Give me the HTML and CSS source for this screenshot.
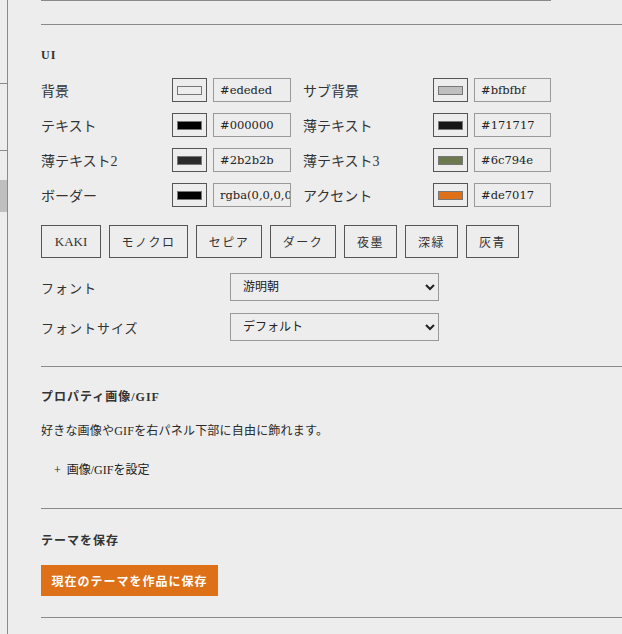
FILE: index.html
```
<!DOCTYPE html>
<html lang="ja">

<head>
    <meta charset="UTF-8">
    <meta name="viewport" content="width=device-width, initial-scale=1.0">
    <title>テーマ設定</title>
    <link rel="stylesheet" href="styles.css">
</head>

<body>
    <div class="layout">
        <aside class="side-rail">
            <div class="rail-item"></div>
            <div class="rail-item short"></div>
            <div class="rail-item active"></div>
        </aside>

        <main class="panel">
            <div class="prev-field"></div>

            <section class="section">
                <h3 class="section-title">UI</h3>

                <div class="color-grid">
                    <div class="color-field">
                        <span class="color-label">背景</span>
                        <span class="swatch"><span class="swatch-fill" style="background:#ededed"></span></span>
                        <input class="hex-input" type="text" value="#ededed">
                    </div>
                    <div class="color-field">
                        <span class="color-label">サブ背景</span>
                        <span class="swatch"><span class="swatch-fill" style="background:#bfbfbf"></span></span>
                        <input class="hex-input" type="text" value="#bfbfbf">
                    </div>
                    <div class="color-field">
                        <span class="color-label">テキスト</span>
                        <span class="swatch"><span class="swatch-fill" style="background:#000000"></span></span>
                        <input class="hex-input" type="text" value="#000000">
                    </div>
                    <div class="color-field">
                        <span class="color-label">薄テキスト</span>
                        <span class="swatch"><span class="swatch-fill" style="background:#171717"></span></span>
                        <input class="hex-input" type="text" value="#171717">
                    </div>
                    <div class="color-field">
                        <span class="color-label">薄テキスト2</span>
                        <span class="swatch"><span class="swatch-fill" style="background:#2b2b2b"></span></span>
                        <input class="hex-input" type="text" value="#2b2b2b">
                    </div>
                    <div class="color-field">
                        <span class="color-label">薄テキスト3</span>
                        <span class="swatch"><span class="swatch-fill" style="background:#6c794e"></span></span>
                        <input class="hex-input" type="text" value="#6c794e">
                    </div>
                    <div class="color-field">
                        <span class="color-label">ボーダー</span>
                        <span class="swatch"><span class="swatch-fill" style="background:#000000"></span></span>
                        <input class="hex-input" type="text" value="rgba(0,0,0,0.45)">
                    </div>
                    <div class="color-field">
                        <span class="color-label">アクセント</span>
                        <span class="swatch"><span class="swatch-fill" style="background:#de7017"></span></span>
                        <input class="hex-input" type="text" value="#de7017">
                    </div>
                </div>

                <div class="presets">
                    <button class="preset-btn">KAKI</button>
                    <button class="preset-btn">モノクロ</button>
                    <button class="preset-btn">セピア</button>
                    <button class="preset-btn">ダーク</button>
                    <button class="preset-btn">夜墨</button>
                    <button class="preset-btn">深緑</button>
                    <button class="preset-btn">灰青</button>
                </div>

                <div class="select-list">
                    <div class="select-row">
                        <span class="select-label">フォント</span>
                        <select class="select-box">
                            <option>游明朝</option>
                        </select>
                    </div>
                    <div class="select-row">
                        <span class="select-label">フォントサイズ</span>
                        <select class="select-box">
                            <option>デフォルト</option>
                        </select>
                    </div>
                </div>
            </section>

            <section class="section">
                <h3 class="section-title">プロパティ画像/GIF</h3>
                <p class="note">好きな画像やGIFを右パネル下部に自由に飾れます。</p>
                <button class="add-btn">+&nbsp; 画像/GIFを設定</button>
            </section>

            <section class="section">
                <h3 class="section-title save-title">テーマを保存</h3>
                <button class="save-btn">現在のテーマを作品に保存</button>
            </section>

            <div class="panel-end"></div>
        </main>
    </div>
</body>

</html>
```

FILE: styles.css
```
* {
    margin: 0;
    padding: 0;
    box-sizing: border-box;
    font-family: "Liberation Serif", "Noto Sans CJK JP", serif;
}

body {
    background: #ededed;
    color: #2a2a2a;
}

.layout {
    display: flex;
    min-height: 634px;
}

.side-rail {
    width: 8px;
    flex: 0 0 8px;
    border-right: 1px solid #8a8a8a;
    padding-top: 83px;
}

.rail-item {
    height: 67px;
    border-top: 1px solid #8a8a8a;
}

.rail-item.short {
    height: 30px;
}

.rail-item.active {
    height: 32px;
    border-top: none;
    background: #bfbfbf;
}

.panel {
    flex: 1;
    padding-left: 33px;
    overflow: hidden;
}

.prev-field {
    width: 510px;
    height: 1px;
    background: #8a8a8a;
}

.section {
    border-top: 1px solid #8a8a8a;
    margin-top: 23px;
    padding-top: 22px;
}

.section + .section {
    margin-top: 0;
}

.section-title {
    font-size: 12px;
    font-weight: bold;
    line-height: 16px;
    letter-spacing: 1px;
    color: #333;
}

.color-grid {
    display: grid;
    grid-template-columns: 262px 248px;
    row-gap: 11px;
    margin-top: 15px;
}

.color-field {
    display: flex;
    align-items: center;
    height: 24px;
}

.color-label {
    width: 131px;
    flex: 0 0 131px;
    font-size: 14px;
    color: #333;
}

.color-field:nth-child(even) .color-label {
    width: 130px;
    flex-basis: 130px;
}

.swatch {
    width: 35px;
    height: 24px;
    flex: 0 0 35px;
    border: 1px solid #555;
    display: flex;
    align-items: center;
    justify-content: center;
}

.swatch-fill {
    width: 25px;
    height: 9px;
    border: 1px solid #777;
}

.hex-input {
    width: 78px;
    height: 24px;
    margin-left: 6px;
    border: 1px solid #999;
    background: #ededed;
    font-family: "DejaVu Serif", serif;
    font-size: 11.5px;
    padding-left: 6px;
    color: #222;
    outline: none;
}

.color-field:nth-child(even) .hex-input {
    width: 77px;
}

.presets {
    display: flex;
    gap: 8px;
    margin-top: 18px;
}

.preset-btn {
    height: 33px;
    padding: 0;
    border: 1px solid #555;
    background: transparent;
    font-size: 12px;
    letter-spacing: 1.5px;
    white-space: nowrap;
    color: #333;
}

.preset-btn:first-child {
    width: 60px;
    font-size: 13px;
    letter-spacing: 0;
}

.preset-btn:nth-child(2) {
    width: 79px;
}

.preset-btn:nth-child(3),
.preset-btn:nth-child(4) {
    width: 66px;
}

.preset-btn:nth-child(n+5) {
    width: 53px;
}

.select-list {
    display: flex;
    flex-direction: column;
    gap: 12px;
    margin-top: 15px;
    padding-bottom: 25px;
}

.select-row {
    display: flex;
    align-items: center;
}

.select-label {
    width: 189px;
    font-size: 13px;
    letter-spacing: 1px;
    color: #333;
}

.select-box {
    width: 209px;
    height: 28px;
    border: 1px solid #999;
    border-radius: 0;
    background: #ededed;
    font-size: 12px;
    padding-left: 8px;
    color: #222;
}

.note {
    font-size: 12px;
    line-height: 17px;
    letter-spacing: 0.2px;
    margin-top: 18px;
}

.add-btn {
    display: block;
    background: none;
    border: none;
    font-size: 12px;
    line-height: 17px;
    color: #222;
    padding: 0 13px;
    margin-top: 22px;
    padding-bottom: 29px;
}

.save-title {
    margin-top: 2px;
}

.save-btn {
    display: block;
    margin-top: 16px;
    margin-bottom: 21px;
    width: 177px;
    height: 31px;
    border: none;
    background: #de7017;
    color: #fff;
    font-size: 12px;
    font-weight: bold;
    letter-spacing: 1px;
}

.panel-end {
    border-top: 1px solid #8a8a8a;
}
```
